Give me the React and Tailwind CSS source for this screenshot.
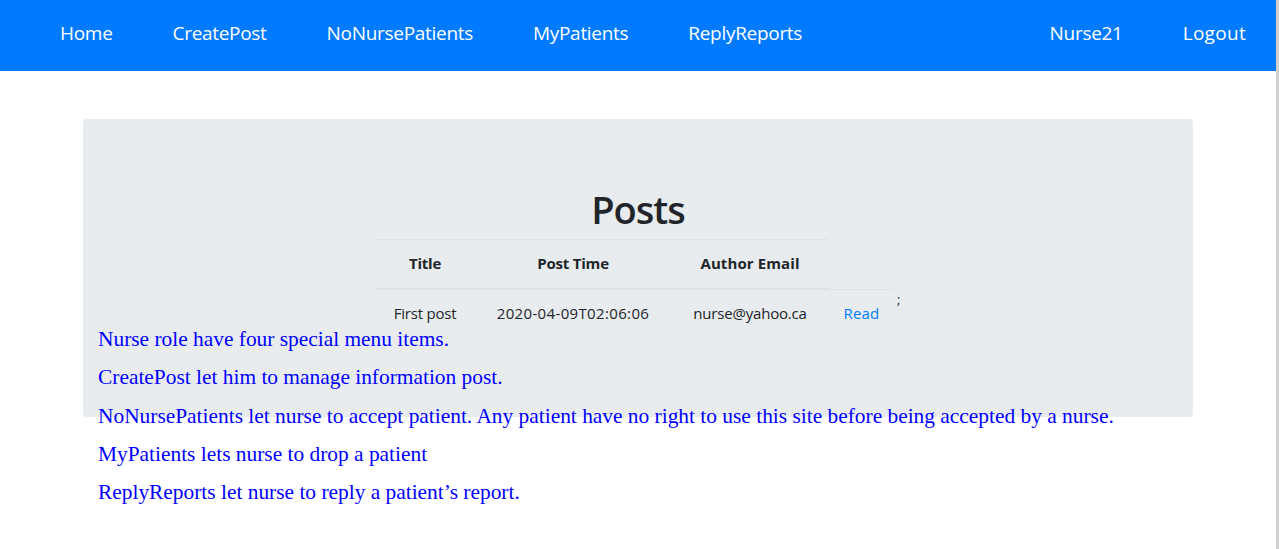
import React from "react";

const sans = { fontFamily: '"Open Sans", "Noto Sans", sans-serif' };

export default function App() {
  const left = ["Home", "CreatePost", "NoNursePatients", "MyPatients", "ReplyReports"];
  return (
    <div className="flex w-[1279px] h-[549px] bg-white overflow-hidden" style={sans}>
      <div className="w-[1276px] flex flex-col">
        <nav className="h-[71px] bg-[#007bff] flex items-center justify-between px-[30px] pb-[4px] text-white text-[19px]">
          <div className="flex">
            {left.map((l) => (
              <span key={l} className="px-[30px] tracking-[-0.3px]">{l}</span>
            ))}
          </div>
          <div className="flex">
            <span className="px-[30px] tracking-[-0.3px]">Nurse21</span>
            <span className="pl-[30px] tracking-[0.3px]">Logout</span>
          </div>
        </nav>
        <div className="mt-[48px] mx-auto w-[1110px] h-[298px] bg-[#e9ecef] rounded-[4px] relative">
          <h1 className="pt-[66px] text-center text-[38px] leading-[48px] font-semibold text-[#212529] tracking-[-1px]">Posts</h1>
          <div className="flex items-start mt-[6px] ml-[293px] text-[15px] text-[#212529] tracking-[-0.2px]">
            <div>
              <div className="flex w-[452px] border-t border-[#dee2e6] border-b-2 h-[51px] items-center font-bold pb-[2px]">
                <div className="w-[98px] text-center">Title</div>
                <div className="w-[198px] text-center">Post Time</div>
                <div className="w-[156px] text-center tracking-[0.1px]">Author Email</div>
              </div>
              <div className="flex w-[519px] border-t border-[#dee2e6] -mt-px h-[50px] items-center pb-[2px]">
                <div className="w-[98px] text-center">First post</div>
                <div className="w-[198px] text-center tracking-[0.35px]">2020-04-09T02:06:06</div>
                <div className="w-[156px] text-center">nurse@yahoo.ca</div>
                <div className="w-[67px] text-center text-[#007bff] tracking-[0.2px]">Read</div>
              </div>
            </div>
            <span className="mt-[51px] ml-[2px] text-[13px]">;</span>
          </div>
          <div
            className="absolute left-[15px] top-[201px] flex flex-col text-[#0000ff] text-[21.4px] leading-[38.3px]"
            style={{ fontFamily: '"Liberation Serif", "Times New Roman", serif' }}
          >
            <p>Nurse role have four special menu items.</p>
            <p>CreatePost let him to manage information post.</p>
            <p>NoNursePatients let nurse to accept patient. Any patient have no right to use this site before being accepted by a nurse.</p>
            <p>MyPatients lets nurse to drop a patient</p>
            <p>ReplyReports let nurse to reply a patient’s report.</p>
          </div>
        </div>
      </div>
      <div className="w-[3px] bg-[#d0d0d0]"></div>
    </div>
  );
}
